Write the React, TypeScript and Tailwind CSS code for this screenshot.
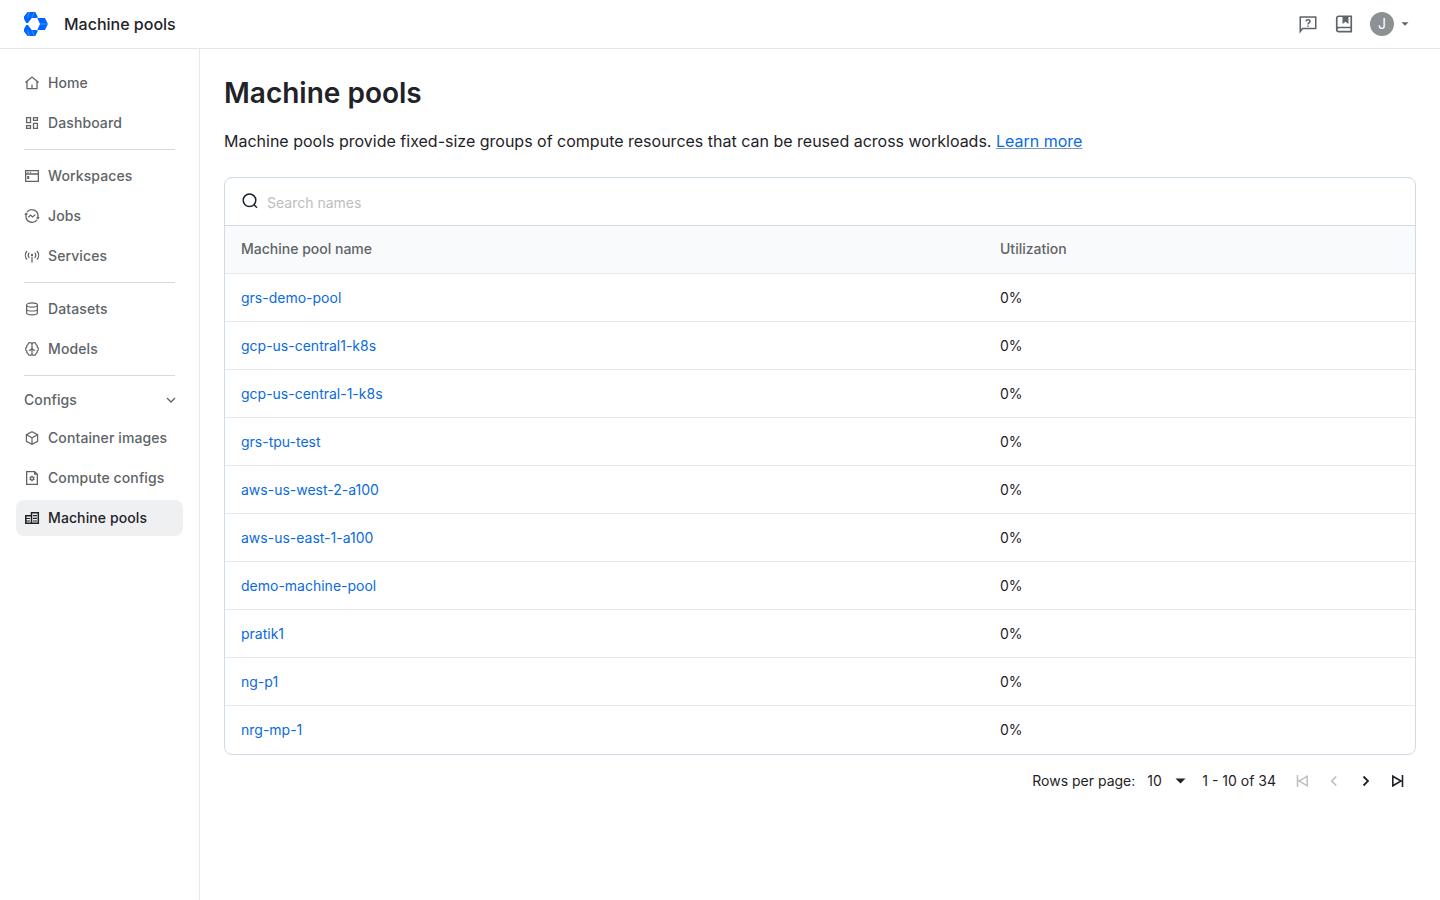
import type { ReactNode } from "react";

const pools = [
  "grs-demo-pool",
  "gcp-us-central1-k8s",
  "gcp-us-central-1-k8s",
  "grs-tpu-test",
  "aws-us-west-2-a100",
  "aws-us-east-1-a100",
  "demo-machine-pool",
  "pratik1",
  "ng-p1",
  "nrg-mp-1",
];

function Icon({ children, width = 1.25 }: { children: ReactNode; width?: number }) {
  return (
    <svg className="size-4 shrink-0" viewBox="0 0 16 16" fill="none" stroke="currentColor" strokeWidth={width}>
      {children}
    </svg>
  );
}

const icons = {
  home: (
    <Icon>
      <path d="M1.4 7.6 8 2l6.6 5.6M3 6.4v7.3h10V6.4M8 9.6v4" />
    </Icon>
  ),
  dashboard: (
    <Icon width={1.3}>
      <path d="M2.6 2.6h3.9v5H2.6zM9.5 2.6h3.9v2.800H9.500zM2.600 10.600h3.900v2.800H2.600zM9.500 8.400h3.900v5H9.500z" />
    </Icon>
  ),
  workspaces: (
    <Icon width={1.3}>
      <path d="M1.65 2.65h12.7v10.7H1.65zM1.65 6h12.7M3.5 4.4h1M6 4.4h1" />
      <path d="M3.2 8h2v3h-2z" fill="currentColor" stroke="none" />
    </Icon>
  ),
  jobs: (
    <Icon width={1.25}>
      <path d="M3 4.2A6.1 6.1 0 0 1 14 8.2v2.3M13 11.8A6.1 6.1 0 0 1 2 7.8V5.5M.9 6.6 2 5.4l1.5 1M12.5 9.6 14 10.6l1.1-1.2" />
      <path d="M4.3 9.2 6.6 7l2 2L11.4 6.6" />
    </Icon>
  ),
  services: (
    <Icon width={1.25}>
      <path d="M3 3a6.5 6.5 0 0 0 0 8.6M13 3a6.5 6.5 0 0 1 0 8.6M5.3 4.7a4 4 0 0 0 0 5.2M10.7 4.7a4 4 0 0 1 0 5.2M8 8.8v5.7" />
      <circle cx="8" cy="7" r="1.2" fill="currentColor" stroke="none" />
    </Icon>
  ),
  datasets: (
    <Icon width={1.2}>
      <ellipse cx="8" cy="4" rx="5.4" ry="2.1" />
      <path d="M2.6 4v7.8c0 1.2 2.4 2.1 5.4 2.1s5.4-.9 5.4-2.1V4M2.6 7.900C2.600 9.100 5 10 8 10s5.400-.9 5.400-2.100" />
    </Icon>
  ),
  models: (
    <Icon width={1.2}>
      <path d="M8 3.4C7.8 2.2 7 1.7 6 1.7c-1.2 0-2 .8-2.1 1.9C2.9 4 2.5 4.9 2.8 5.9 1.9 6.4 1.6 7.1 1.6 8s.3 1.6 1.2 2.1c-.3 1 .1 1.9 1.1 2.3.1 1.1.9 1.9 2.1 1.9 1 0 1.8-.5 2-1.7zM8 3.4c.2-1.2 1-1.7 2-1.7 1.2 0 2 .8 2.1 1.9 1 .4 1.4 1.3 1.1 2.3.9.5 1.2 1.2 1.2 2.1s-.3 1.6-1.2 2.1c.3 1-.1 1.9-1.1 2.3-.1 1.1-.9 1.9-2.1 1.9-1 0-1.8-.5-2-1.7" />
      <path d="M4.8 9.2c1.6.3 2.5-.4 3.2-1.6.7 1.2 1.6 1.9 3.2 1.6" />
    </Icon>
  ),
  container: (
    <Icon width={1.2}>
      <path d="M8 1.7 13.6 4.7v6.6L8 14.3l-5.6-3V4.7zM2.4 4.7 8 7.7l5.6-3M8 7.7v6.6" />
    </Icon>
  ),
  compute: (
    <Icon width={1.3}>
      <path d="M2.65 1.65h8l2.7 2.7v10H2.65z" />
      <path d="M10 1.6v3.2h3.4z" fill="currentColor" stroke="none" />
      <circle cx="8" cy="8.4" r="1.6" />
      <path d="M8 5.7v1.2M8 10v1.2M5.6 7l1 .6M9.5 9.2l1 .6M5.6 9.8l1-.6M9.5 7.6l1-.6" strokeWidth="1.2" />
    </Icon>
  ),
  machines: (
    <Icon width={1.5}>
      <path d="M7.5 2.7h6.8v10.6H7.5zM7.5 5.7H1.8v7.6h5.7" />
      <path d="M2 8.5h4M2 11h4M9 5.6h4M9 8.4h4M9 11h4" strokeWidth="1.2" />
    </Icon>
  ),
};

function NavItem({ icon, label, active = false }: { icon: ReactNode; label: string; active?: boolean }) {
  return (
    <a
      className={
        active
          ? "flex h-9 items-center gap-2 rounded-lg bg-[#eff0f2] px-2 text-[#1f2328]"
          : "flex h-9 items-center gap-2 rounded-lg px-2 text-[#5e6468]"
      }
    >
      {icon}
      <span className="whitespace-nowrap">{label}</span>
    </a>
  );
}

function Divider() {
  return <hr className="mx-2 my-1 border-[#cfdbe6]" />;
}

function Logo() {
  return (
    <svg className="size-6" viewBox="0 0 24 24" fill="#0066ff">
      <path d="M3.500 0h7.800l2.600 5.200-1.400.8H7.800L3.900 10.900H2.200L0 7V4.500z" />
      <path d="M3.500 24h7.800l2.600-5.200-1.400-.8H7.800l-3.900-4.900H2.200L0 17v2.500z" />
      <path d="M13.300 6.100h7.600L24 12l-3.100 5.900h-7.600L16 12z" />
      <path
        d="M5.500 0 3.400 5.200M7.800 5.600 10 .8M5.500 24l-2.100-5.200M7.800 18.400l2.200 4.800M16.200 12H24"
        stroke="#fff"
        strokeWidth=".5"
        strokeOpacity=".6"
        fill="none"
      />
    </svg>
  );
}

function Header() {
  return (
    <header className="flex h-[49px] shrink-0 items-center border-b border-[#e2e8ee] px-6">
      <Logo />
      <span className="ml-4 text-base font-medium">Machine pools</span>
      <div className="ml-auto flex items-center text-[#5e6468]">
        <svg className="size-5" viewBox="0 0 20 20" fill="none" stroke="currentColor" strokeWidth="1.5">
          <path d="M2.25 17.5V3h15.5v11.5H4.5z" />
          <path d="M8 7.4c.1-1 .9-1.7 2-1.7s2 .7 2 1.7c0 1.4-2 1.5-2 3M10 11.4v1.4" />
        </svg>
        <svg className="ml-4 size-5" viewBox="0 0 20 20" fill="none" stroke="currentColor" strokeWidth="1.7">
          <path d="M17.25 13.5V2.25H4.8c-1.2 0-2.05.8-2.05 2v11.25c0 1.2.85 2.05 2.05 2.05h12.45V13.5H4.8c-1.2 0-2.05.8-2.05 2" />
          <path d="M8.5 2h6v8l-3-2.2-3 2.2z" fill="currentColor" stroke="none" />
        </svg>
        <span className="ml-4 flex size-6 items-center justify-center rounded-full bg-[#8c9194] text-sm text-white">J</span>
        <svg className="ml-[7px] mr-[7px] h-2 w-2" viewBox="0 0 8 8" fill="currentColor">
          <path d="M.5 2.2h7L4 5.8z" />
        </svg>
      </div>
    </header>
  );
}

function Sidebar() {
  return (
    <nav className="flex w-[200px] shrink-0 flex-col gap-1 border-r border-[#e5e9ee] px-4 pt-4 text-sm font-medium tracking-[0.1px]">
      <NavItem icon={icons.home} label="Home" />
      <NavItem icon={icons.dashboard} label="Dashboard" />
      <Divider />
      <NavItem icon={icons.workspaces} label="Workspaces" />
      <NavItem icon={icons.jobs} label="Jobs" />
      <NavItem icon={icons.services} label="Services" />
      <Divider />
      <NavItem icon={icons.datasets} label="Datasets" />
      <NavItem icon={icons.models} label="Models" />
      <Divider />
      <div className="flex h-8 items-center justify-between pl-2 pr-1 text-[#5e6468]">
        <span>Configs</span>
        <Icon width={1.3}>
          <path d="m4 6 4 4 4-4" />
        </Icon>
      </div>
      <NavItem icon={icons.container} label="Container images" />
      <NavItem icon={icons.compute} label="Compute configs" />
      <NavItem icon={icons.machines} label="Machine pools" active />
    </nav>
  );
}

function Pagination() {
  return (
    <div className="flex h-[52px] items-center justify-end pr-2 text-sm">
      <span>Rows per page:</span>
      <span className="ml-3">10</span>
      <svg className="ml-3 mr-px h-3 w-3" viewBox="0 0 12 12" fill="currentColor">
        <path d="M1.500 3.500h10L6.500 8.500z" />
      </svg>
      <span className="ml-[15.500px]">1 - 10 of 34</span>
      <div className="ml-4 flex gap-3">
        <svg className="size-5 text-[#bcbec0]" viewBox="0 0 20 20" fill="none" stroke="currentColor" strokeWidth="1.5">
          <path d="M5.5 4v12M15.2 5.2v9.6L7 10z" />
        </svg>
        <svg className="size-5 text-[#bcbec0]" viewBox="0 0 20 20" fill="none" stroke="currentColor" strokeWidth="1.6">
          <path d="m12.2 5.500-4.500 4.500 4.500 4.500" />
        </svg>
        <svg className="size-5" viewBox="0 0 20 20" fill="none" stroke="currentColor" strokeWidth="1.8">
          <path d="m7.5 5.500 4.500 4.500-4.500 4.500" />
        </svg>
        <svg className="size-5" viewBox="0 0 20 20" fill="none" stroke="currentColor" strokeWidth="1.6">
          <path d="M14.5 4v12M4.8 5.200v9.600L13 10z" />
        </svg>
      </div>
    </div>
  );
}

export default function App() {
  return (
    <div className="flex h-[900px] flex-col overflow-hidden bg-white font-['Inter',sans-serif] text-[#1f2328]">
      <Header />
      <div className="flex min-h-0 flex-1">
        <Sidebar />
        <main className="flex-1 px-6 pt-6">
          <h1 className="text-[28px] leading-10 font-semibold">Machine pools</h1>
          <p className="mt-4 text-base">
            Machine pools provide fixed-size groups of compute resources that can be reused across workloads.{" "}
            <a className="text-[#0a6bdc] underline decoration-[#7f97b5]">Learn more</a>
          </p>
          <section className="mt-6 overflow-hidden rounded-lg border border-[#cfdbe6] text-sm">
            <div className="flex h-12 items-center gap-2 border-b border-[#cfdbe6] px-4">
              <svg className="mb-px size-[18px]" viewBox="0 0 18 18" fill="none" stroke="currentColor" strokeWidth="1.5">
                <circle cx="8.5" cy="8.3" r="6.3" />
                <path d="m13 12.800 3 3" />
              </svg>
              <span className="pt-[3px] text-[#bcbec0]">Search names</span>
            </div>
            <div className="grid h-12 grid-cols-[759px_1fr] items-center border-b border-[#e5e9ee] bg-[#f9fafc] px-4 pb-px font-medium text-[#5e6468]">
              <span>Machine pool name</span>
              <span>Utilization</span>
            </div>
            {pools.map((name) => (
              <div
                key={name}
                className="grid h-12 grid-cols-[759px_1fr] items-center border-b border-[#e5e9ee] px-4 last:border-b-0"
              >
                <a className="text-[#0a6bdc]">{name}</a>
                <span>0%</span>
              </div>
            ))}
          </section>
          <Pagination />
        </main>
      </div>
    </div>
  );
}
